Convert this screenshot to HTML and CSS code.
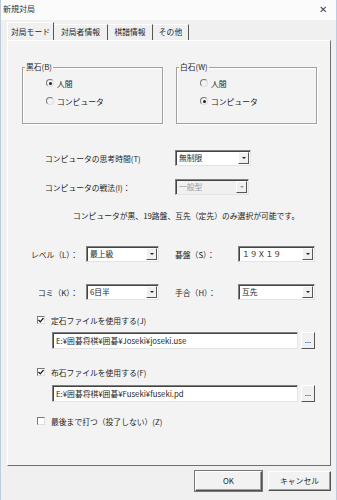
FILE: index.html
```html
<!DOCTYPE html>
<html lang="ja">
<head>
    <meta charset="UTF-8">
    <title>新規対局</title>
    <link rel="stylesheet" href="styles.css">
</head>
<body>
<div class="window">

    <!-- Title bar -->
    <div class="titlebar">
        <span class="title">新規対局</span>
        <span class="close">✕</span>
    </div>

    <!-- Tabs -->
    <div class="tabs">
        <div class="tab active" style="width: 47px">対局モード</div>
        <div class="tab" style="width: 54px">対局者情報</div>
        <div class="tab" style="width: 45px">棋譜情報</div>
        <div class="tab" style="width: 36px">その他</div>
    </div>

    <div class="panel">

        <!-- Player groups -->
        <div class="groups">
            <fieldset class="group">
                <legend>黒石(B)</legend>
                <div class="radio-list">
                    <div class="radio-row"><span class="radio checked"></span>人間</div>
                    <div class="radio-row"><span class="radio"></span>コンピュータ</div>
                </div>
            </fieldset>
            <fieldset class="group">
                <legend>白石(W)</legend>
                <div class="radio-list">
                    <div class="radio-row"><span class="radio"></span>人間</div>
                    <div class="radio-row"><span class="radio checked"></span>コンピュータ</div>
                </div>
            </fieldset>
        </div>

        <!-- Computer settings -->
        <div class="row row-think">
            <span class="label-wide">コンピュータの思考時間(T)</span>
            <div class="select" style="width: 76px"><span class="value">無制限</span><span class="arrow"></span></div>
        </div>
        <div class="row row-tactic">
            <span class="label-wide">コンピュータの戦法(I)：</span>
            <div class="select disabled" style="width: 74px"><span class="value">一般型</span><span class="arrow"></span></div>
        </div>

        <p class="note">コンピュータが黒、19路盤、互先（定先）のみ選択が可能です。</p>

        <!-- Game settings -->
        <div class="row row-level">
            <span class="label-left">レベル（L）：</span>
            <div class="select" style="width: 73px"><span class="value">最上級</span><span class="arrow"></span></div>
            <span class="label-right">碁盤（S）：</span>
            <div class="select" style="width: 77px"><span class="value">１９Ｘ１９</span><span class="arrow"></span></div>
        </div>
        <div class="row row-komi">
            <span class="label-left">コミ（K）：</span>
            <div class="select" style="width: 73px"><span class="value">6目半</span><span class="arrow"></span></div>
            <span class="label-right">手合（H）：</span>
            <div class="select" style="width: 77px"><span class="value">互先</span><span class="arrow"></span></div>
        </div>

        <!-- Opening books -->
        <div class="check-row check-joseki">
            <span class="checkbox checked"><svg width="6" height="6" viewBox="0 0 6 6"><path d="M0.5 3 L2.3 4.8 L5.5 1" fill="none" stroke="#222" stroke-width="1.3"/></svg></span>
            定石ファイルを使用する(J)
        </div>
        <div class="path-row path-joseki">
            <div class="path">E:¥囲碁将棋¥囲碁¥Joseki¥joseki.use</div>
            <div class="browse">...</div>
        </div>

        <div class="check-row check-fuseki">
            <span class="checkbox checked"><svg width="6" height="6" viewBox="0 0 6 6"><path d="M0.5 3 L2.3 4.8 L5.5 1" fill="none" stroke="#222" stroke-width="1.3"/></svg></span>
            布石ファイルを使用する(F)
        </div>
        <div class="path-row path-fuseki">
            <div class="path">E:¥囲碁将棋¥囲碁¥Fuseki¥fuseki.pd</div>
            <div class="browse">...</div>
        </div>

        <div class="check-row check-last">
            <span class="checkbox"></span>
            最後まで打つ（投了しない）(Z)
        </div>
    </div>

    <!-- Dialog buttons -->
    <div class="buttons">
        <div class="button default">OK</div>
        <div class="button">キャンセル</div>
    </div>
</div>
</body>
</html>
```

FILE: styles.css
```css
/* General */
* {
    box-sizing: border-box;
}

body {
    margin: 0;
    width: 337px;
    height: 500px;
    overflow: hidden;
    background-color: #f0f0f0;
    font-family: "Noto Sans CJK JP", "Noto Sans", sans-serif;
    font-size: 7.8px;
    color: #1e1e1e;
}

.window {
    height: 500px;
    border-left: 1px solid #bccde2;
    border-right: 1px solid #bccde2;
}

/* Title bar */
.titlebar {
    height: 20px;
    display: flex;
    align-items: center;
    justify-content: space-between;
    padding: 0 9px 3px 2px;
    background-color: #fbfbfb;
}

.title {
    font-size: 8px;
    color: #333;
}

.close {
    font-size: 10px;
    color: #444;
}

/* Tabs */
.tabs {
    display: flex;
    align-items: flex-end;
    height: 20px;
    padding-left: 6px;
}

.tab {
    height: 16px;
    line-height: 14px;
    text-align: center;
    border-top: 1px solid #fff;
    border-right: 1px solid #555;
}

.tab.active {
    height: 18px;
    line-height: 17px;
    border-left: 1px solid #fff;
}

/* Tab panel */
.panel {
    height: 426px;
    margin: 0 5px 0 6px;
    border: 1px solid #fff;
    border-right-color: #707070;
    border-bottom-color: #707070;
    background-color: #f3f3f3;
}

/* Group boxes */
.groups {
    display: flex;
    gap: 13px;
    padding-left: 14px;
    margin-top: 21px;
}

.group {
    width: 141px;
    margin: 0;
    padding: 0 0 16px 2px;
    border: 1px solid #a0a0a0;
    box-shadow: inset 1px 1px 0 #fff, 1px 1px 0 #fff;
}

.group legend {
    padding: 0 1px;
    line-height: 10px;
}

.radio-list {
    margin: 5px 0 0 21px;
    display: flex;
    flex-direction: column;
    gap: 6px;
}

.radio-row {
    display: flex;
    align-items: center;
    gap: 3px;
    height: 12px;
}

.radio {
    width: 8px;
    height: 8px;
    border-radius: 50%;
    border: 1px solid #777;
    border-right-color: #ddd;
    border-bottom-color: #ddd;
    display: flex;
    align-items: center;
    justify-content: center;
}

.radio.checked::after {
    content: "";
    width: 3px;
    height: 3px;
    border-radius: 50%;
    background-color: #222;
}

/* Rows with selects */
.row {
    display: flex;
    align-items: center;
    height: 16px;
}

.row-think {
    margin-top: 26px;
    padding-left: 37px;
}

.row-tactic {
    margin-top: 13px;
    padding-left: 37px;
}

.label-wide {
    width: 130px;
}

.label-left {
    width: 70px;
    margin-right: 8px;
    text-align: right;
}

.label-right {
    width: 63px;
    margin-left: 16px;
}

.row-level {
    margin-top: 25px;
}

.row-komi {
    margin-top: 22px;
}

.select {
    height: 16px;
    display: flex;
    align-items: stretch;
    background-color: #fff;
    border: 1px solid #808080;
    border-right-color: #e4e4e4;
    border-bottom-color: #e4e4e4;
    box-shadow: inset 1px 1px 0 #444;
}

.select .value {
    flex: 1;
    padding-left: 3px;
    line-height: 14px;
}

.select .arrow {
    width: 11px;
    margin: 1px;
    background-color: #f0f0f0;
    border: 1px solid #fff;
    border-right-color: #555;
    border-bottom-color: #555;
    display: flex;
    align-items: center;
    justify-content: center;
}

.select .arrow::after {
    content: "";
    border-left: 2px solid transparent;
    border-right: 2px solid transparent;
    border-top: 2px solid #222;
}

.select.disabled {
    background-color: #f0f0f0;
    color: #999;
}

.select.disabled .arrow::after {
    border-top-color: #999;
}

.note {
    margin: 16px 0 0 0;
    padding-left: 65px;
    line-height: 10px;
}

/* Checkboxes and file paths */
.check-row {
    display: flex;
    align-items: center;
    gap: 6px;
    height: 10px;
    padding-left: 29px;
}

.checkbox {
    width: 8px;
    height: 8px;
    background-color: #fff;
    border: 1px solid #777;
    border-right-color: #ddd;
    border-bottom-color: #ddd;
    display: flex;
    align-items: center;
    justify-content: center;
}

.check-joseki {
    margin-top: 15px;
}

.check-fuseki {
    margin-top: 18px;
}

.check-last {
    margin-top: 14px;
}

.path-row {
    display: flex;
    gap: 3px;
    padding-left: 44px;
    height: 17px;
}

.path-joseki {
    margin-top: 7px;
}

.path-fuseki {
    margin-top: 8px;
}

.path {
    width: 246px;
    padding-left: 3px;
    line-height: 15px;
    background-color: #fff;
    border: 1px solid #808080;
    border-right-color: #e4e4e4;
    border-bottom-color: #e4e4e4;
    box-shadow: inset 1px 1px 0 #444;
}

.browse {
    width: 14px;
    text-align: center;
    line-height: 13px;
    border: 1px solid #fff;
    border-right-color: #555;
    border-bottom-color: #555;
    background-color: #f0f0f0;
}

/* Dialog buttons */
.buttons {
    display: flex;
    justify-content: flex-end;
    gap: 6px;
    padding: 5px 5px 0 0;
}

.button {
    height: 20px;
    line-height: 18px;
    text-align: center;
    width: 63px;
    background-color: #f2f2f2;
    border: 1px solid #fff;
    border-right-color: #505050;
    border-bottom-color: #505050;
    box-shadow: inset -1px -1px 0 #a0a0a0;
}

.button.default {
    width: 67px;
    outline: 1px solid #777;
}
```
